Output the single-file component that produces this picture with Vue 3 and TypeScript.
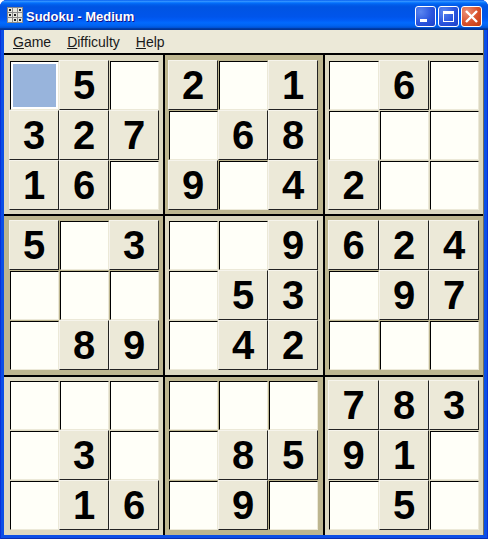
<script setup lang="ts">
const blocks: number[][] = [
  [0, 5, 0, 3, 2, 7, 1, 6, 0],
  [2, 0, 1, 0, 6, 8, 9, 0, 4],
  [0, 6, 0, 0, 0, 0, 2, 0, 0],
  [5, 0, 3, 0, 0, 0, 0, 8, 9],
  [0, 0, 9, 0, 5, 3, 0, 4, 2],
  [6, 2, 4, 0, 9, 7, 0, 0, 0],
  [0, 0, 0, 0, 3, 0, 0, 1, 6],
  [0, 0, 0, 0, 8, 5, 0, 9, 0],
  [7, 8, 3, 9, 1, 0, 0, 5, 0],
]
const menus = [
  { key: 'G', rest: 'ame' },
  { key: 'D', rest: 'ifficulty' },
  { key: 'H', rest: 'elp' },
]
const isSelected = (b: number, c: number) => b === 0 && c === 0
</script>

<template>
  <div class="window">
    <header class="titlebar">
      <svg class="app-icon" width="16" height="16" viewBox="0 0 16 16">
        <rect x="0" y="0" width="16" height="16" fill="#8a8a8a" />
        <rect x="1" y="1" width="4" height="4" fill="#e8e8e0" />
        <rect x="6" y="1" width="4" height="4" fill="#e8e8e0" />
        <rect x="11" y="1" width="4" height="4" fill="#e8e8e0" />
        <rect x="1" y="6" width="4" height="4" fill="#e8e8e0" />
        <rect x="6" y="6" width="4" height="4" fill="#e8e8e0" />
        <rect x="11" y="6" width="4" height="4" fill="#e8e8e0" />
        <rect x="1" y="11" width="4" height="4" fill="#e8e8e0" />
        <rect x="6" y="11" width="4" height="4" fill="#e8e8e0" />
        <rect x="11" y="11" width="4" height="4" fill="#e8e8e0" />
        <rect x="2" y="2" width="2" height="2" fill="#222" />
        <rect x="12" y="2" width="2" height="2" fill="#222" />
        <rect x="7" y="7" width="2" height="2" fill="#222" />
        <rect x="2" y="7" width="2" height="2" fill="#222" />
        <rect x="12" y="12" width="2" height="2" fill="#222" />
        <rect x="7" y="12" width="2" height="2" fill="#222" />
      </svg>
      <span class="title">Sudoku - Medium</span>
      <div class="controls">
        <button class="ctl">
          <svg width="19" height="19" viewBox="0 0 19 19"><rect x="4" y="12" width="7" height="3" fill="#fff" /></svg>
        </button>
        <button class="ctl">
          <svg width="19" height="19" viewBox="0 0 19 19">
            <path d="M4 4h11v11H4z M5 7v7h9V7z" fill="#fff" fill-rule="evenodd" />
          </svg>
        </button>
        <button class="ctl close">
          <svg width="19" height="19" viewBox="0 0 19 19">
            <path d="M4 4l11 11M15 4L4 15" stroke="#fff" stroke-width="2.4" fill="none" />
          </svg>
        </button>
      </div>
    </header>
    <div class="client">
      <nav class="menubar">
        <span v-for="m in menus" :key="m.key" class="menu"><u>{{ m.key }}</u>{{ m.rest }}</span>
      </nav>
      <main class="board">
        <section v-for="(block, b) in blocks" :key="b" class="block" :class="{ dark: b % 2 === 1 }">
          <div
            v-for="(v, c) in block"
            :key="c"
            class="cell"
            :class="v ? 'given' : isSelected(b, c) ? 'open selected' : 'open'"
          >{{ v || '' }}</div>
        </section>
      </main>
    </div>
  </div>
</template>

<style scoped>
.window {
  width: 488px;
  height: 539px;
  display: flex;
  flex-direction: column;
  box-sizing: border-box;
  border-radius: 7px 7px 0 0;
  background: #0b4fe6;
  box-shadow: inset 1px 0 #0831d9, inset -1px 0 #0831d9, inset 0 -1px #0a2fb0;
  overflow: hidden;
}
.titlebar {
  height: 30px;
  flex: none;
  display: flex;
  align-items: center;
  padding: 0 6px 0 7px;
  box-sizing: border-box;
  background: linear-gradient(180deg, #0058ee 0%, #3593ff 4%, #288eff 6%, #127dff 8%, #036ffc 10%, #0262ee 14%, #0057e5 20%, #0054e3 24%, #0055eb 56%, #005bf5 66%, #026afe 76%, #0062ef 86%, #0052d6 92%, #0040ab 94%, #003092 100%);
}
.app-icon {
  flex: none;
}
.title {
  margin: 3px 0 0 3px;
  color: #fff;
  font: bold 13px "Liberation Sans", Arial, sans-serif;
  text-shadow: 1px 1px #0f1089;
}
.controls {
  margin: 3px 0 0 auto;
  display: flex;
  gap: 2px;
}
.ctl {
  width: 21px;
  height: 21px;
  padding: 0;
  border: 1px solid #fff;
  border-radius: 3px;
  background: radial-gradient(circle at 25% 25%, #5a86f0 0%, #2a55de 55%, #1c3fc8 100%);
  display: flex;
  align-items: center;
  justify-content: center;
}
.ctl.close {
  background: radial-gradient(circle at 25% 25%, #eb9078 0%, #d9512c 55%, #c13a10 100%);
}
.client {
  flex: 1;
  margin: 0 4px 4px;
  display: flex;
  flex-direction: column;
  min-height: 0;
  background: #ece9d8;
  border-right: 1px solid #6f6d60;
}
.menubar {
  height: 23px;
  flex: none;
  display: flex;
  align-items: center;
  gap: 16px;
  padding-left: 9px;
  font: 14px "Liberation Sans", Arial, sans-serif;
  color: #1a1a1a;
}
.board {
  flex: 1;
  display: grid;
  grid-template-columns: 159px 158px 158px;
  grid-template-rows: 159px 159px 158px;
  gap: 2px;
  padding-top: 2px;
  background: #000;
}
.block {
  display: grid;
  grid-template-columns: repeat(3, 50px);
  grid-template-rows: repeat(3, 50px);
  background: #dcd8c0;
  padding-left: 3px;
  padding-top: 4px;
}
.block.dark {
  background: #bdb68f;
}
.block:nth-child(3n + 1) {
  padding-left: 5px;
}
.block:nth-child(3n) {
  grid-template-columns: 51px 50px 50px;
}
.block:nth-child(-n + 3) {
  padding-top: 5px;
}
.block:nth-child(n + 7) {
  padding-top: 3px;
}
.cell {
  box-sizing: border-box;
  display: flex;
  align-items: center;
  justify-content: center;
  font: bold 40px "Liberation Sans", Arial, sans-serif;
  color: #000;
}
.given {
  background: #ece9d8;
  border-top: 1px solid #f6f4ec;
  border-left: 1px solid #f6f4ec;
  border-right: 1px solid #222;
  border-bottom: 1px solid #222;
}
.open {
  margin: 1px 0 0 1px;
  background: #fffff8;
  border-top: 1px solid #000;
  border-left: 1px solid #000;
  border-right: 1px solid #ece9d8;
  border-bottom: 1px solid #ece9d8;
}
.selected {
  background: #98b4dc;
  box-shadow: inset 0 0 0 2px #fff;
}
</style>

<style>
html, body {
  margin: 0;
  background: #fff;
}
</style>
